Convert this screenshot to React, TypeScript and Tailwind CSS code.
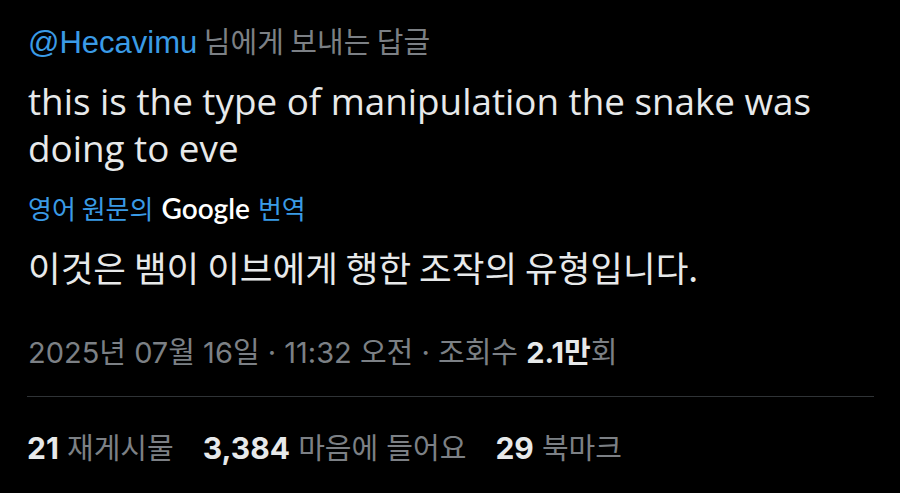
import React from 'react';

const ui = { fontFamily: 'Inter, "Noto Sans CJK KR", sans-serif' };
const hangul = { fontFamily: '"Noto Sans CJK KR", sans-serif' };

const Stat = ({ n, label }: { n: string; label: string }) => (
  <span className="whitespace-nowrap">
    <span className="text-[30px] font-bold text-[#e7e9ea]">{n}</span>
    <span className="text-[#7c8085]"> {label}</span>
  </span>
);

export default function App() {
  return (
    <div className="w-[900px] h-[493px] bg-black overflow-hidden text-[#e7e9ea]">
      <div className="px-[28px] pt-[21px]">
        {/* reply target */}
        <div className="leading-[38px] whitespace-nowrap">
          <span className="text-[31px] text-[#3a9be6]" style={{ fontFamily: '"Liberation Sans", sans-serif' }}>
            @Hecavimu
          </span>
          <span className="text-[29px] text-[#7c8085]" style={hangul}>
            {' '}님에게 보내는 답글
          </span>
        </div>

        {/* tweet body */}
        <p
          className="mt-[12px] text-[36.8px] leading-[47px] text-[#e7e9ea]"
          style={{ fontFamily: '"Open Sans", sans-serif' }}
        >
          this is the type of manipulation the snake was doing to eve
        </p>

        {/* translation */}
        <div className="mt-[19px] flex items-center gap-[8px] text-[26px] leading-[34px] text-[#3a9be6] whitespace-nowrap" style={hangul}>
          <span>영어 원문의</span>
          <span className="text-[28px] text-white font-semibold" style={{ fontFamily: 'Lato, sans-serif' }}>
            Google
          </span>
          <span>번역</span>
        </div>
        <p className="mt-[20px] text-[35.5px] leading-[44px] text-[#e7e9ea] whitespace-nowrap" style={hangul}>
          이것은 뱀이 이브에게 행한 조작의 유형입니다.
        </p>

        {/* timestamp */}
        <div className="mt-[46px] text-[29px] leading-[36px] text-[#7c8085] whitespace-nowrap" style={ui}>
          2025년 07월 16일 · 11:32 오전 · 조회수 <span className="font-bold text-[#e7e9ea]">2.1만</span>회
        </div>
      </div>

      <div className="pl-[27px] pr-[26px]">
        <div className="mt-[25px] h-px bg-[#2f3336]" />
        <div className="mt-[33px] flex gap-[29px] text-[29px] leading-[36px]" style={ui}>
          <Stat n="21" label="재게시물" />
          <Stat n="3,384" label="마음에 들어요" />
          <Stat n="29" label="북마크" />
        </div>
      </div>
    </div>
  );
}
